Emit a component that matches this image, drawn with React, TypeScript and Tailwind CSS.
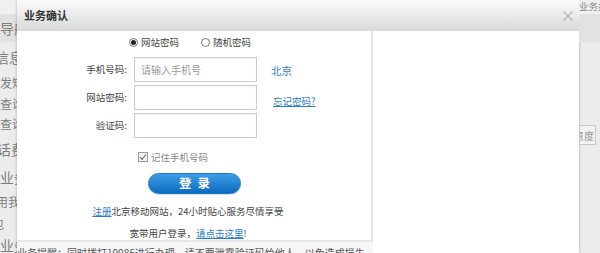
import React from 'react';

const font = { fontFamily: '"Noto Sans CJK SC", "Liberation Sans", sans-serif' };

const Radio: React.FC<{ checked?: boolean; label: string }> = ({ checked, label }) => (
    <label className="flex items-center gap-[3px] text-[9.5px] text-[#444]">
        <span className="w-[9px] h-[9px] rounded-full border border-[#777] bg-white flex items-center justify-center">
            {checked && <span className="w-[5px] h-[5px] rounded-full bg-[#222]"></span>}
        </span>
        {label}
    </label>
);

const Field: React.FC<{ label: string; placeholder?: string; extra?: React.ReactNode }> = ({ label, placeholder, extra }) => (
    <div className="flex items-center h-[25px]">
        <div className="w-[111px] text-right text-[9.5px] text-[#444] pr-[1px]">{label}</div>
        <div className="ml-[6px] w-[123px] h-[25px] border border-[#ccc] shadow-[inset_0_1px_2px_rgba(0,0,0,0.06)] bg-white flex items-center px-[6px] text-[10px] text-[#999]">
            {placeholder}
        </div>
        <div className="ml-[14px]">{extra}</div>
    </div>
);

export default function App() {
    return (
        <div className="w-[600px] h-[253px] flex overflow-hidden bg-[#ececec]" style={font}>
            {/* page behind, left edge */}
            <div className="w-[17px] shrink-0 overflow-hidden text-[#808080] whitespace-nowrap">
                <div className="h-[14px] bg-[#f0f0f0]"></div>
                <div className="h-[28px] bg-[#e2e2e2] text-[14px] leading-[28px]">导航</div>
                <div className="h-[26px] text-[14px] leading-[26px] -ml-[5px] mt-[2px]">信息</div>
                <div className="h-[22px] text-[12px] leading-[22px] mt-[2px]">发短</div>
                <div className="h-[20px] text-[12px] leading-[20px]">查询</div>
                <div className="h-[20px] text-[12px] leading-[20px]">查询</div>
                <div className="h-[28px] text-[14px] leading-[28px] -ml-[3px] mt-[1px]">话费</div>
                <div className="h-[28px] text-[14px] leading-[28px]">业务</div>
                <div className="h-[22px] text-[12px] leading-[22px] -ml-[4px]">用我</div>
                <div className="h-[21px] text-[12px] leading-[21px] -ml-[8px]">包</div>
                <div className="h-[22px] text-[14px] leading-[22px]">业务</div>
            </div>

            {/* dialog */}
            <div className="w-[562px] shrink-0 flex flex-col bg-white shadow-[0_0_3px_rgba(0,0,0,0.25)]">
                <div className="h-[31px] shrink-0 flex items-center justify-between pl-[7px] pr-[4px] bg-gradient-to-b from-[#fbfbfb] to-[#d9d9d9]">
                    <span className="text-[11px] font-bold text-[#333]">业务确认</span>
                    <svg width="12" height="12" viewBox="0 0 12 12" className="mr-[1px]">
                        <path d="M1.5 1.5 L10.5 10.5 M10.5 1.5 L1.5 10.5" stroke="#b5b5b5" strokeWidth="1.2" />
                    </svg>
                </div>

                <div className="flex flex-1">
                    <div className="w-[356px] shrink-0 flex flex-col">
                        <div className="h-[211px] border-r-2 border-b-2 border-[#e6e6e6] flex flex-col">
                            <div className="flex items-center gap-[22px] ml-[112px] mt-[6px] h-[11px]">
                                <Radio checked label="网站密码" />
                                <Radio label="随机密码" />
                            </div>
                            <div className="flex flex-col gap-[3px] mt-[9px]">
                                <Field
                                    label="手机号码:"
                                    placeholder="请输入手机号"
                                    extra={<span className="text-[10.5px] text-[#2f7cc9] relative -top-[2px]">北京</span>}
                                />
                                <Field
                                    label="网站密码:"
                                    extra={<span className="text-[9.5px] text-[#2f7cc9] underline ml-[2px]">忘记密码?</span>}
                                />
                                <Field label="验证码:" />
                            </div>
                            <div className="flex items-center gap-[3px] ml-[121px] mt-[12px] text-[9.5px] text-[#888]">
                                <span className="w-[10px] h-[10px] border border-[#999] bg-[#f4f4f4] flex items-center justify-center">
                                    <svg width="8" height="8" viewBox="0 0 8 8">
                                        <path d="M1 4 L3 6.3 L7 1.5" stroke="#666" strokeWidth="1.1" fill="none" />
                                    </svg>
                                </span>
                                记住手机号码
                            </div>
                            <div className="ml-[131px] mt-[9px] w-[93px] h-[21px] rounded-full bg-gradient-to-b from-[#3d9ee6] to-[#0b6bc0] border border-[#1a78c8] flex items-center justify-center text-white font-bold text-[12.5px] tracking-[6px] pl-[6px] shadow-[0_1px_1px_rgba(0,0,0,0.15)]">
                                登录
                            </div>
                            <div className="text-center text-[9.5px] text-[#444] mt-[10px] pr-[12px]">
                                <span className="text-[#2f7cc9] underline">注册</span>北京移动网站，24小时贴心服务尽情享受
                            </div>
                            <div className="text-center text-[9.5px] text-[#444] mt-[8px] pr-[12px]">
                                宽带用户登录，<span className="text-[#2f7cc9] underline">请点击这里</span>!
                            </div>
                        </div>
                        <div className="flex-1 bg-[#f6f6f6] overflow-hidden whitespace-nowrap text-[10px] leading-[14px] text-[#555] pt-[4px]">
                            业务提醒：同时拨打10086进行办理，请不要泄露验证码给他人，以免造成损失，详情请咨询
                        </div>
                    </div>
                    <div className="flex-1 bg-white"></div>
                </div>
            </div>

            {/* page behind, right edge */}
            <div className="flex-1 overflow-hidden whitespace-nowrap text-[#888]">
                <div className="h-[14px] bg-[#f0f0f0] text-[9.5px] leading-[12px]">业务办理</div>
                <div className="h-[28px] bg-[#e2e2e2]"></div>
                <div className="mt-[83px] h-[20px] w-[17px] border border-[#c8c8c8] bg-[#f2f2f2] flex items-center justify-end overflow-hidden text-[10px] text-[#999] pr-[1px]">
                    意度
                </div>
            </div>
        </div>
    );
}
